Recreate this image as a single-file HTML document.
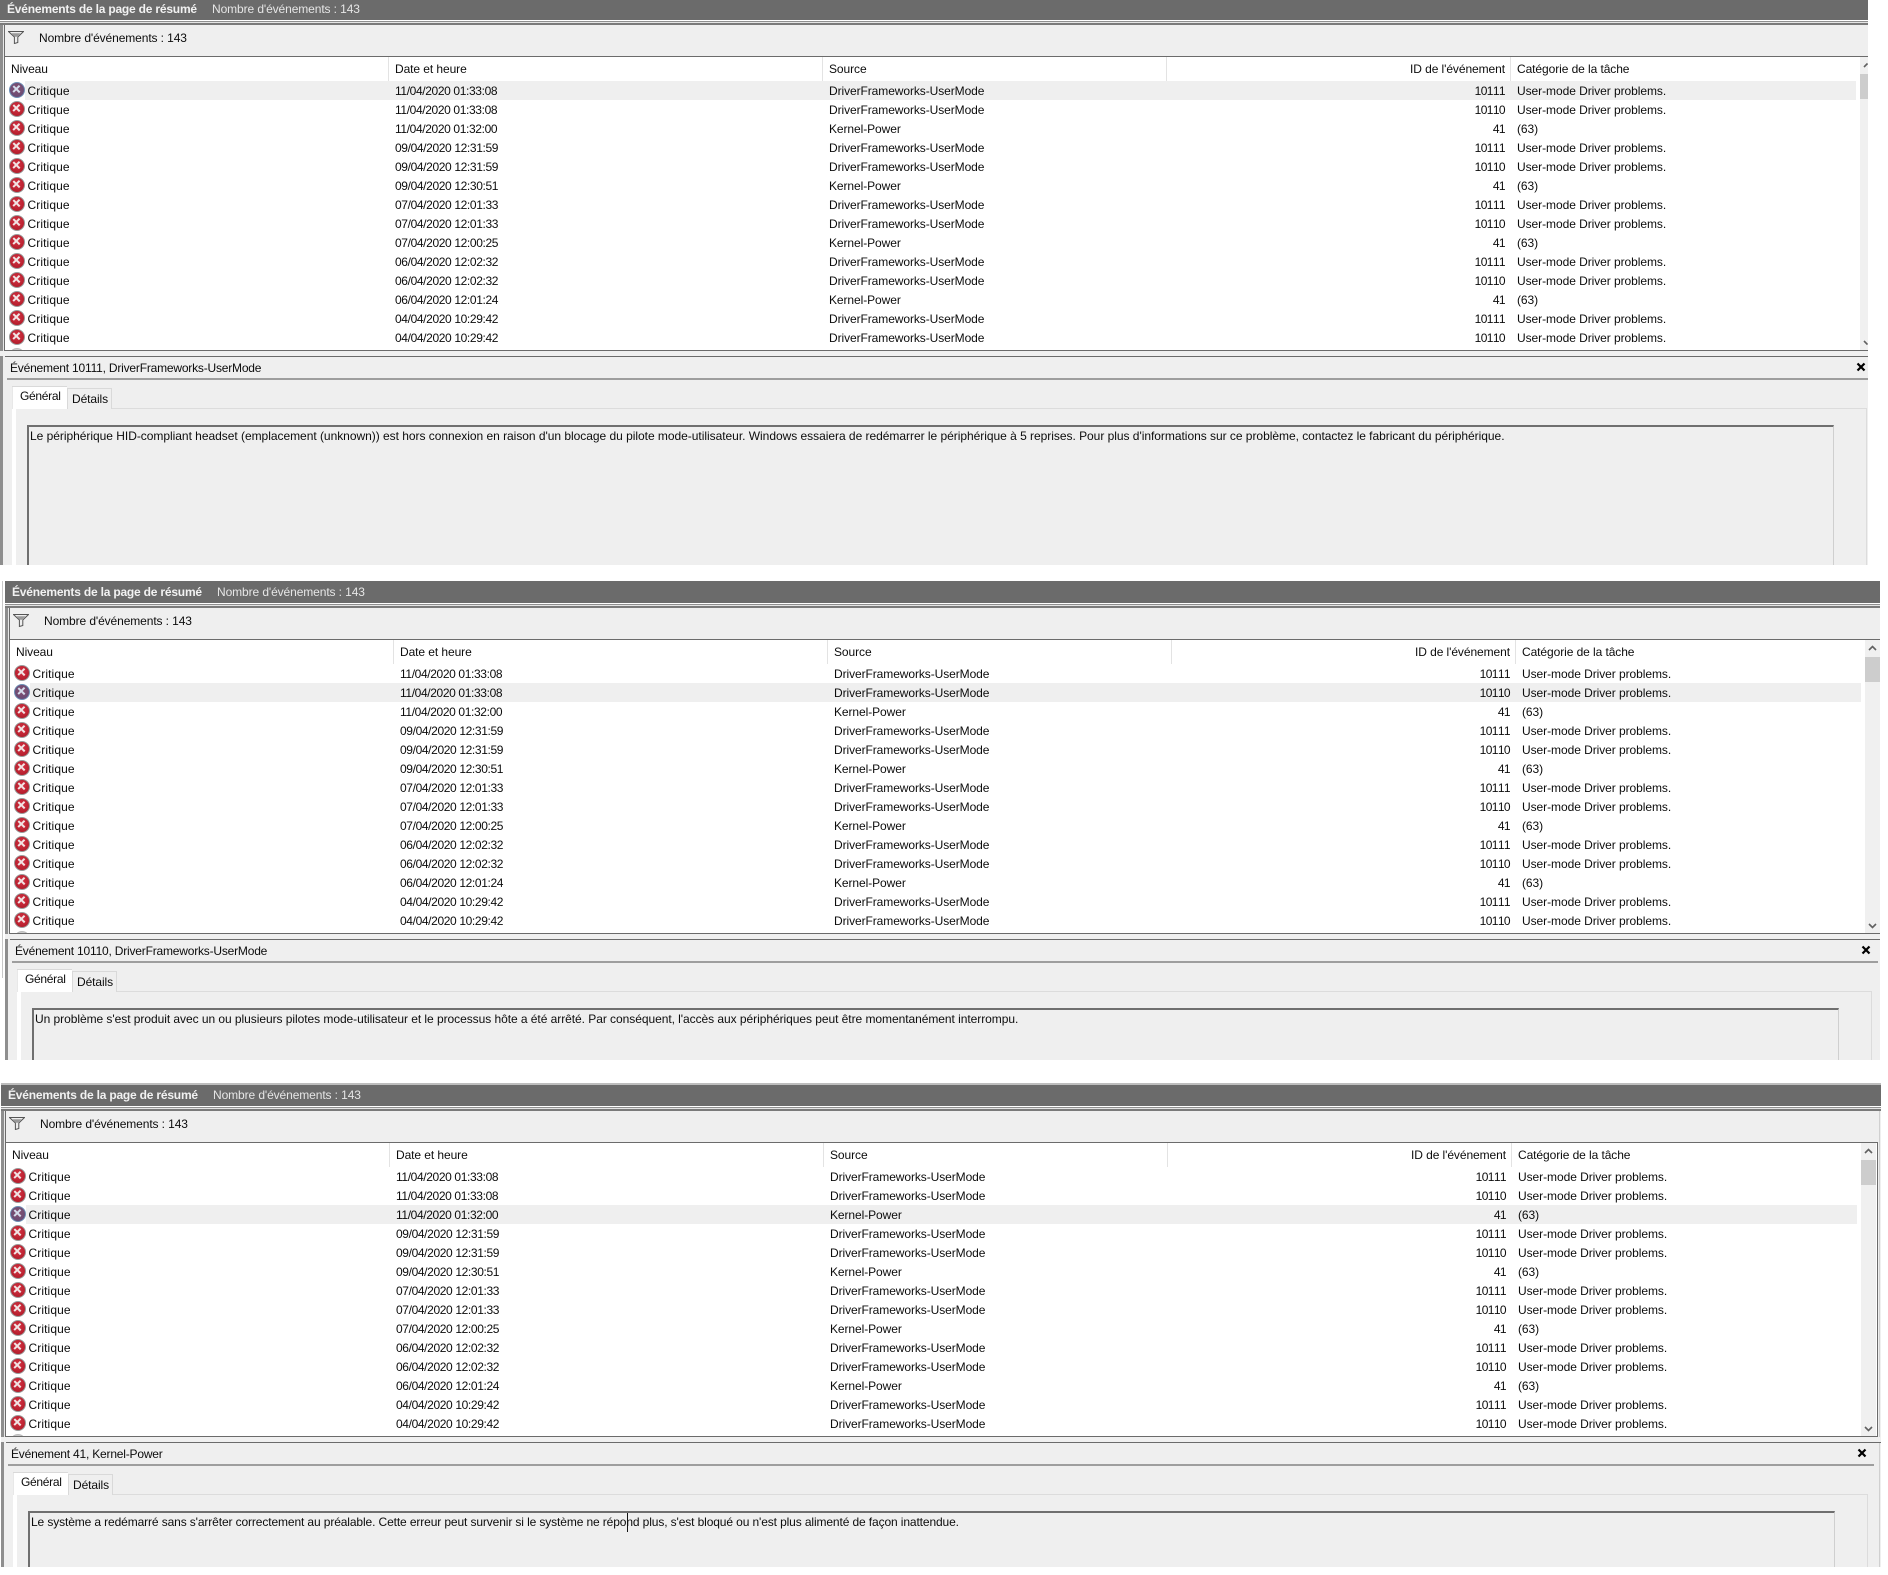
<!DOCTYPE html>
<html lang="fr"><head><meta charset="utf-8"><title>Événements</title>
<style>
html,body{margin:0;padding:0;background:#fff}
body{position:relative;width:1888px;height:1575px;overflow:hidden;font:12px/19px "Liberation Sans",sans-serif;color:#0c0c0c}
.p{position:absolute;overflow:hidden;background:#efefef}
.in{position:absolute;left:0;width:100%}
.in>*{position:absolute}
.tt{left:0;right:0;top:-3px;height:23px;background:#6b6b6b}
.h1{left:7px;top:0;line-height:19px;font-weight:bold;color:#f2f2f2;letter-spacing:-.2px;white-space:nowrap}
.h2{left:212px;top:0;line-height:19px;color:#e6e6e6;white-space:nowrap;letter-spacing:-.1px}
.ln{left:0;right:0;top:20px;height:5px;background:linear-gradient(#fff 0 1px,#8f8f8f 1px 2px,#e4e4e4 2px 3px,#7a7a7a 3px 5px)}
.fc{left:39px;top:29px;white-space:nowrap;letter-spacing:-.1px}
.fl{left:8px;top:30px}
.f0{left:0;top:25px;width:3px;bottom:0;background:#8e8e8e}
.f1{left:3px;top:25px;width:1px;height:331px;background:#e8e8e8}
.f2{left:4px;top:25px;width:1px;height:326px;background:#6b6b6b}
.tb{left:5px;top:56px;height:295px;background:#fff;border-top:1px solid #6b6b6b;border-bottom:1px solid #6b6b6b;box-sizing:border-box;overflow:hidden}
.hd{position:absolute;top:0;line-height:24px;height:24px;white-space:nowrap;letter-spacing:-.08px}
.sp{position:absolute;top:0;width:1px;height:24px;background:#e3e3e3}
.r{position:absolute;left:-5px;width:1856px;height:19px;line-height:19px;white-space:nowrap}
.r span{position:absolute;top:1px}
.r span:nth-of-type(1){left:27.5px;letter-spacing:.1px}
.r span:nth-of-type(2){left:395px;letter-spacing:-.37px}
.r span:nth-of-type(3){left:829px;letter-spacing:-.08px}
.r span:nth-of-type(4){right:351px;letter-spacing:-.6px;font-kerning:none}
.r span:nth-of-type(5){left:1517px;letter-spacing:-.06px}
.sel{background:linear-gradient(90deg,#fff 0 25px,#efefef 25px)}
.r0{top:24px}.r1{top:43px}.r2{top:62px}.r3{top:81px}.r4{top:100px}.r5{top:119px}.r6{top:138px}.r7{top:157px}.r8{top:176px}.r9{top:195px}.r10{top:214px}.r11{top:233px}.r12{top:252px}.r13{top:271px}.r14{top:290px}
.r i{position:absolute;left:9px;top:1px;width:16px;height:16px;border-radius:50%;box-sizing:border-box;border:1.5px solid #9a9a9a;background:radial-gradient(circle at 50% 40%,#d63444,#a81624)}
.r i:before,.r i:after{content:"";position:absolute;left:2.25px;top:5.4px;width:8.5px;height:2.2px;background:#f2e4e4;transform:rotate(45deg)}
.r i:after{transform:rotate(-45deg)}
.sel i{border-color:#6d8fb5;background:radial-gradient(circle at 50% 40%,#86506e,#5e4a78)}
.sel i:before,.sel i:after{background:#d4dcec}
.sb{left:1860px;top:57px;width:15px;height:293px;background:#f0f0f0}
.th{left:1860px;top:74px;width:15px;height:25px;background:#cdcdcd}
.ar{left:1863px;width:9px;height:6px}
.rb{left:1876px;top:56px;width:1px;height:295px;background:#6b6b6b}
.rc{left:1878px;top:25px;width:1px;bottom:0;background:#d0d0d0}
.dt{left:0;right:0;top:351px;height:5px;background:#f0f0f0}
.dl{left:5px;right:0;top:356px;height:1px;background:#6b6b6b}
.dn{left:7px;top:378px;width:1866px;max-width:calc(100% - 7px);height:2px;background:#9e9e9e}
.dc{left:10px;top:359px;white-space:nowrap;letter-spacing:-.2px}
.x{left:1856px;top:362px}
.t1{left:12px;top:386px;width:55px;height:23px;background:#fff;box-shadow:inset 0 1px #d9d9d9,inset 1px 0 #e8e8e8;z-index:2}
.t2{left:67px;top:388px;width:45px;height:21px;background:#efefef;box-sizing:border-box;border:1px solid #d9d9d9;border-bottom:0}
.t1t{left:20px;top:387px;z-index:3;letter-spacing:-.3px}
.t2t{left:72px;top:389.5px;z-index:3;letter-spacing:-.1px}
.cn{left:12px;top:408px;width:1855px;bottom:0;box-sizing:border-box;border:1px solid #dcdcdc;border-left:4px solid #fff;border-bottom:0;background:#efefef}
.bx{left:27px;top:425px;width:1807px;bottom:0;box-sizing:border-box;border:2px solid #6f6f6f;border-right:1px solid #cfcfcf;border-bottom:0}
.tx{left:30px;top:426.5px;white-space:nowrap}
.car{top:427px;width:1px;height:19px;background:#111}
</style></head><body>

<!-- PANEL 1 -->
<div class="p" style="left:0;top:0;width:1868px;height:565px"><div class="in" style="top:0;height:565px">
<div class="tt"></div><div class="h1">Événements de la page de résumé</div><div class="h2">Nombre d'événements : 143</div>
<div class="ln"></div>
<svg class="fl" width="16" height="14" viewBox="0 0 16 14"><path d="M.5 1.5H15.5L9.8 7v5.5l-3.4 1V7z" fill="#eee" stroke="#555"/><path d="M3.5 3.2h9L9 6.8H7z" fill="#999"/></svg>
<div class="fc">Nombre d'événements : 143</div>
<div class="f0"></div><div class="f1"></div><div class="f2"></div>
<div class="tb" style="width:1863px">
<div class="hd" style="left:6px">Niveau</div><div class="sp" style="left:383px"></div>
<div class="hd" style="left:390px">Date et heure</div><div class="sp" style="left:817px"></div>
<div class="hd" style="left:824px">Source</div><div class="sp" style="left:1161px"></div>
<div class="hd" style="left:1300px;width:200px;text-align:right">ID de l'événement</div><div class="sp" style="left:1505px"></div>
<div class="hd" style="left:1512px">Catégorie de la tâche</div>
<div class="r r0 sel"><i></i><span>Critique</span><span>11/04/2020 01:33:08</span><span>DriverFrameworks-UserMode</span><span>10111</span><span>User-mode Driver problems.</span></div>
<div class="r r1"><i></i><span>Critique</span><span>11/04/2020 01:33:08</span><span>DriverFrameworks-UserMode</span><span>10110</span><span>User-mode Driver problems.</span></div>
<div class="r r2"><i></i><span>Critique</span><span>11/04/2020 01:32:00</span><span>Kernel-Power</span><span>41</span><span>(63)</span></div>
<div class="r r3"><i></i><span>Critique</span><span>09/04/2020 12:31:59</span><span>DriverFrameworks-UserMode</span><span>10111</span><span>User-mode Driver problems.</span></div>
<div class="r r4"><i></i><span>Critique</span><span>09/04/2020 12:31:59</span><span>DriverFrameworks-UserMode</span><span>10110</span><span>User-mode Driver problems.</span></div>
<div class="r r5"><i></i><span>Critique</span><span>09/04/2020 12:30:51</span><span>Kernel-Power</span><span>41</span><span>(63)</span></div>
<div class="r r6"><i></i><span>Critique</span><span>07/04/2020 12:01:33</span><span>DriverFrameworks-UserMode</span><span>10111</span><span>User-mode Driver problems.</span></div>
<div class="r r7"><i></i><span>Critique</span><span>07/04/2020 12:01:33</span><span>DriverFrameworks-UserMode</span><span>10110</span><span>User-mode Driver problems.</span></div>
<div class="r r8"><i></i><span>Critique</span><span>07/04/2020 12:00:25</span><span>Kernel-Power</span><span>41</span><span>(63)</span></div>
<div class="r r9"><i></i><span>Critique</span><span>06/04/2020 12:02:32</span><span>DriverFrameworks-UserMode</span><span>10111</span><span>User-mode Driver problems.</span></div>
<div class="r r10"><i></i><span>Critique</span><span>06/04/2020 12:02:32</span><span>DriverFrameworks-UserMode</span><span>10110</span><span>User-mode Driver problems.</span></div>
<div class="r r11"><i></i><span>Critique</span><span>06/04/2020 12:01:24</span><span>Kernel-Power</span><span>41</span><span>(63)</span></div>
<div class="r r12"><i></i><span>Critique</span><span>04/04/2020 10:29:42</span><span>DriverFrameworks-UserMode</span><span>10111</span><span>User-mode Driver problems.</span></div>
<div class="r r13"><i></i><span>Critique</span><span>04/04/2020 10:29:42</span><span>DriverFrameworks-UserMode</span><span>10110</span><span>User-mode Driver problems.</span></div>
<div class="r r14"><i style="border-color:#bbb;background:#ccc"></i></div>
</div>
<div class="sb" style="width:8px"></div><div class="th" style="width:8px"></div>
<svg class="ar" style="top:62px;width:5px" viewBox="0 0 5 6"><path d="M1 5l3.5-3.5" fill="none" stroke="#606060" stroke-width="1.6"/></svg>
<svg class="ar" style="top:340px;width:5px" viewBox="0 0 5 6"><path d="M1 1l3.5 3.5" fill="none" stroke="#606060" stroke-width="1.6"/></svg>
<div class="dt"></div><div class="dl"></div><div class="dn"></div>
<div class="dc">Événement 10111, DriverFrameworks-UserMode</div>
<svg class="x" width="10" height="10" viewBox="0 0 10 10"><path d="M1.5 1.5l7 7M8.5 1.5l-7 7" stroke="#000" stroke-width="2.2"/></svg>
<div class="cn"></div><div class="t2"></div><div class="t1"></div>
<div class="t1t">Général</div><div class="t2t">Détails</div>
<div class="bx"></div>
<div class="tx" style="letter-spacing:-.03px">Le périphérique HID-compliant headset (emplacement (unknown)) est hors connexion en raison d'un blocage du pilote mode-utilisateur. Windows essaiera de redémarrer le périphérique à 5 reprises. Pour plus d'informations sur ce problème, contactez le fabricant du périphérique.</div>
</div></div>

<!-- PANEL 2 -->
<div class="p" style="left:5px;top:581px;width:1875px;height:479px"><div class="in" style="top:2px;height:477px">
<div class="tt"></div><div class="h1">Événements de la page de résumé</div><div class="h2">Nombre d'événements : 143</div>
<div class="ln"></div>
<svg class="fl" width="16" height="14" viewBox="0 0 16 14"><path d="M.5 1.5H15.5L9.8 7v5.5l-3.4 1V7z" fill="#eee" stroke="#555"/><path d="M3.5 3.2h9L9 6.8H7z" fill="#999"/></svg>
<div class="fc">Nombre d'événements : 143</div>
<div class="f0"></div><div class="f1"></div><div class="f2"></div>
<div class="tb" style="width:1870px">
<div class="hd" style="left:6px">Niveau</div><div class="sp" style="left:383px"></div>
<div class="hd" style="left:390px">Date et heure</div><div class="sp" style="left:817px"></div>
<div class="hd" style="left:824px">Source</div><div class="sp" style="left:1161px"></div>
<div class="hd" style="left:1300px;width:200px;text-align:right">ID de l'événement</div><div class="sp" style="left:1505px"></div>
<div class="hd" style="left:1512px">Catégorie de la tâche</div>
<div class="r r0"><i></i><span>Critique</span><span>11/04/2020 01:33:08</span><span>DriverFrameworks-UserMode</span><span>10111</span><span>User-mode Driver problems.</span></div>
<div class="r r1 sel"><i></i><span>Critique</span><span>11/04/2020 01:33:08</span><span>DriverFrameworks-UserMode</span><span>10110</span><span>User-mode Driver problems.</span></div>
<div class="r r2"><i></i><span>Critique</span><span>11/04/2020 01:32:00</span><span>Kernel-Power</span><span>41</span><span>(63)</span></div>
<div class="r r3"><i></i><span>Critique</span><span>09/04/2020 12:31:59</span><span>DriverFrameworks-UserMode</span><span>10111</span><span>User-mode Driver problems.</span></div>
<div class="r r4"><i></i><span>Critique</span><span>09/04/2020 12:31:59</span><span>DriverFrameworks-UserMode</span><span>10110</span><span>User-mode Driver problems.</span></div>
<div class="r r5"><i></i><span>Critique</span><span>09/04/2020 12:30:51</span><span>Kernel-Power</span><span>41</span><span>(63)</span></div>
<div class="r r6"><i></i><span>Critique</span><span>07/04/2020 12:01:33</span><span>DriverFrameworks-UserMode</span><span>10111</span><span>User-mode Driver problems.</span></div>
<div class="r r7"><i></i><span>Critique</span><span>07/04/2020 12:01:33</span><span>DriverFrameworks-UserMode</span><span>10110</span><span>User-mode Driver problems.</span></div>
<div class="r r8"><i></i><span>Critique</span><span>07/04/2020 12:00:25</span><span>Kernel-Power</span><span>41</span><span>(63)</span></div>
<div class="r r9"><i></i><span>Critique</span><span>06/04/2020 12:02:32</span><span>DriverFrameworks-UserMode</span><span>10111</span><span>User-mode Driver problems.</span></div>
<div class="r r10"><i></i><span>Critique</span><span>06/04/2020 12:02:32</span><span>DriverFrameworks-UserMode</span><span>10110</span><span>User-mode Driver problems.</span></div>
<div class="r r11"><i></i><span>Critique</span><span>06/04/2020 12:01:24</span><span>Kernel-Power</span><span>41</span><span>(63)</span></div>
<div class="r r12"><i></i><span>Critique</span><span>04/04/2020 10:29:42</span><span>DriverFrameworks-UserMode</span><span>10111</span><span>User-mode Driver problems.</span></div>
<div class="r r13"><i></i><span>Critique</span><span>04/04/2020 10:29:42</span><span>DriverFrameworks-UserMode</span><span>10110</span><span>User-mode Driver problems.</span></div>
<div class="r r14"><i style="border-color:#bbb;background:#ccc"></i></div>
</div>
<div class="sb"></div><div class="th"></div>
<svg class="ar" style="top:62px" viewBox="0 0 9 6"><path d="M1 5l3.5-3.5L8 5" fill="none" stroke="#606060" stroke-width="1.6"/></svg>
<svg class="ar" style="top:340px" viewBox="0 0 9 6"><path d="M1 1l3.5 3.5L8 1" fill="none" stroke="#606060" stroke-width="1.6"/></svg>
<div class="dt"></div><div class="dl"></div><div class="dn"></div>
<div class="dc">Événement 10110, DriverFrameworks-UserMode</div>
<svg class="x" width="10" height="10" viewBox="0 0 10 10"><path d="M1.5 1.5l7 7M8.5 1.5l-7 7" stroke="#000" stroke-width="2.2"/></svg>
<div class="cn"></div><div class="t2"></div><div class="t1"></div>
<div class="t1t">Général</div><div class="t2t">Détails</div>
<div class="bx"></div>
<div class="tx" style="letter-spacing:-.05px">Un problème s'est produit avec un ou plusieurs pilotes mode-utilisateur et le processus hôte a été arrêté. Par conséquent, l'accès aux périphériques peut être momentanément interrompu.</div>
</div></div>
<div style="position:absolute;left:2px;top:581px;width:1px;height:397px;background:#c8c8c8"></div>

<!-- PANEL 3 -->
<div class="p" style="left:1px;top:1083px;width:1880px;height:484px"><div class="in" style="top:3px;height:481px">
<div class="tt"></div><div style="left:0;right:0;top:-3px;height:2px;background:#bdbdbd"></div>
<div class="h1">Événements de la page de résumé</div><div class="h2">Nombre d'événements : 143</div>
<div class="ln"></div>
<svg class="fl" width="16" height="14" viewBox="0 0 16 14"><path d="M.5 1.5H15.5L9.8 7v5.5l-3.4 1V7z" fill="#eee" stroke="#555"/><path d="M3.5 3.2h9L9 6.8H7z" fill="#999"/></svg>
<div class="fc">Nombre d'événements : 143</div>
<div class="f0"></div><div class="f1"></div><div class="f2"></div>
<div class="tb" style="width:1871px">
<div class="hd" style="left:6px">Niveau</div><div class="sp" style="left:383px"></div>
<div class="hd" style="left:390px">Date et heure</div><div class="sp" style="left:817px"></div>
<div class="hd" style="left:824px">Source</div><div class="sp" style="left:1161px"></div>
<div class="hd" style="left:1300px;width:200px;text-align:right">ID de l'événement</div><div class="sp" style="left:1505px"></div>
<div class="hd" style="left:1512px">Catégorie de la tâche</div>
<div class="r r0"><i></i><span>Critique</span><span>11/04/2020 01:33:08</span><span>DriverFrameworks-UserMode</span><span>10111</span><span>User-mode Driver problems.</span></div>
<div class="r r1"><i></i><span>Critique</span><span>11/04/2020 01:33:08</span><span>DriverFrameworks-UserMode</span><span>10110</span><span>User-mode Driver problems.</span></div>
<div class="r r2 sel"><i></i><span>Critique</span><span>11/04/2020 01:32:00</span><span>Kernel-Power</span><span>41</span><span>(63)</span></div>
<div class="r r3"><i></i><span>Critique</span><span>09/04/2020 12:31:59</span><span>DriverFrameworks-UserMode</span><span>10111</span><span>User-mode Driver problems.</span></div>
<div class="r r4"><i></i><span>Critique</span><span>09/04/2020 12:31:59</span><span>DriverFrameworks-UserMode</span><span>10110</span><span>User-mode Driver problems.</span></div>
<div class="r r5"><i></i><span>Critique</span><span>09/04/2020 12:30:51</span><span>Kernel-Power</span><span>41</span><span>(63)</span></div>
<div class="r r6"><i></i><span>Critique</span><span>07/04/2020 12:01:33</span><span>DriverFrameworks-UserMode</span><span>10111</span><span>User-mode Driver problems.</span></div>
<div class="r r7"><i></i><span>Critique</span><span>07/04/2020 12:01:33</span><span>DriverFrameworks-UserMode</span><span>10110</span><span>User-mode Driver problems.</span></div>
<div class="r r8"><i></i><span>Critique</span><span>07/04/2020 12:00:25</span><span>Kernel-Power</span><span>41</span><span>(63)</span></div>
<div class="r r9"><i></i><span>Critique</span><span>06/04/2020 12:02:32</span><span>DriverFrameworks-UserMode</span><span>10111</span><span>User-mode Driver problems.</span></div>
<div class="r r10"><i></i><span>Critique</span><span>06/04/2020 12:02:32</span><span>DriverFrameworks-UserMode</span><span>10110</span><span>User-mode Driver problems.</span></div>
<div class="r r11"><i></i><span>Critique</span><span>06/04/2020 12:01:24</span><span>Kernel-Power</span><span>41</span><span>(63)</span></div>
<div class="r r12"><i></i><span>Critique</span><span>04/04/2020 10:29:42</span><span>DriverFrameworks-UserMode</span><span>10111</span><span>User-mode Driver problems.</span></div>
<div class="r r13"><i></i><span>Critique</span><span>04/04/2020 10:29:42</span><span>DriverFrameworks-UserMode</span><span>10110</span><span>User-mode Driver problems.</span></div>
<div class="r r14"><i style="border-color:#bbb;background:#ccc"></i></div>
</div>
<div class="sb"></div><div class="th"></div>
<svg class="ar" style="top:62px" viewBox="0 0 9 6"><path d="M1 5l3.5-3.5L8 5" fill="none" stroke="#606060" stroke-width="1.6"/></svg>
<svg class="ar" style="top:340px" viewBox="0 0 9 6"><path d="M1 1l3.5 3.5L8 1" fill="none" stroke="#606060" stroke-width="1.6"/></svg>
<div class="rb"></div><div class="rc"></div>
<div class="dt"></div><div class="dl"></div><div class="dn"></div>
<div class="dc">Événement 41, Kernel-Power</div>
<svg class="x" width="10" height="10" viewBox="0 0 10 10"><path d="M1.5 1.5l7 7M8.5 1.5l-7 7" stroke="#000" stroke-width="2.2"/></svg>
<div class="cn"></div><div class="t2"></div><div class="t1"></div>
<div class="t1t">Général</div><div class="t2t">Détails</div>
<div class="bx"></div>
<div class="tx" style="letter-spacing:-.117px">Le système a redémarré sans s'arrêter correctement au préalable. Cette erreur peut survenir si le système ne répond plus, s'est bloqué ou n'est plus alimenté de façon inattendue.</div>
<div class="car" style="left:626px"></div>
</div></div>
</body></html>
